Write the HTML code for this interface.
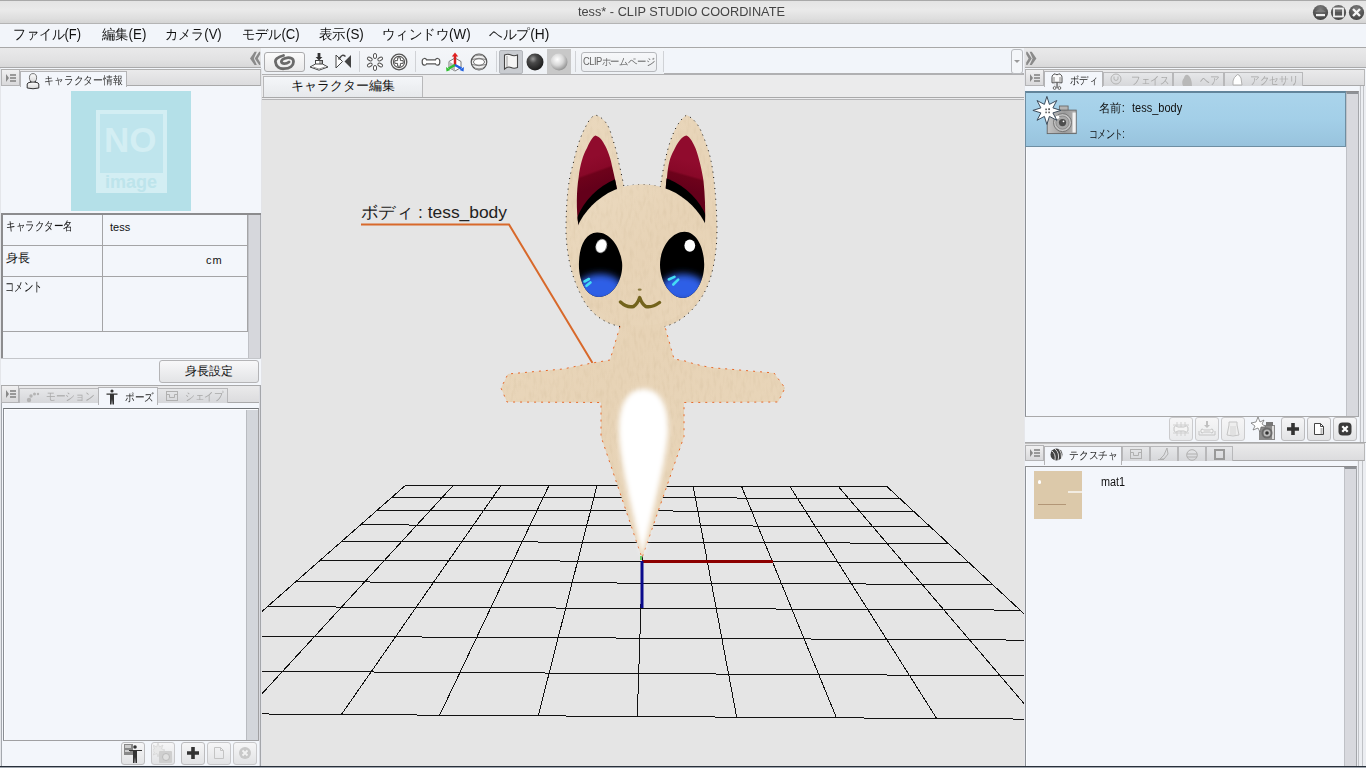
<!DOCTYPE html>
<html><head><meta charset="utf-8">
<style>
*{box-sizing:border-box;margin:0;padding:0}
html,body{width:1366px;height:768px;overflow:hidden;background:#f2f5fa;font-family:"Liberation Sans",sans-serif;color:#111}
.a{position:absolute}
.t{position:absolute;white-space:nowrap;line-height:1}
</style></head><body>
<!-- title bar -->
<div class="a" style="left:0;top:0;width:1366px;height:24px;background:linear-gradient(#e4e4e4,#eaeaea 40%,#dedede 80%,#d4d4d4);border-top:1px solid #a9a9a9;border-bottom:1px solid #b4b4b4"></div>
<div class="t" style="left:578px;top:5px;font-size:13px;color:#444;transform:scaleX(0.98);transform-origin:0 0">tess* - CLIP STUDIO COORDINATE</div>

<svg class="a" style="left:1312px;top:4px" width="54" height="17" viewBox="0 0 54 17"><defs><radialGradient id="wb" cx="0.5" cy="0.25" r="0.8"><stop offset="0" stop-color="#7a7a7a"/><stop offset="1" stop-color="#3e3e3e"/></radialGradient></defs>
<circle cx="8.5" cy="8.5" r="7.6" fill="url(#wb)"/><path d="M3 8 Q8.5 2.5 14 8Z" fill="#8a8a8a" opacity="0.6"/><rect x="4" y="10" width="9" height="2.2" fill="#f0f0f0"/>
<circle cx="26.5" cy="8.5" r="7.6" fill="url(#wb)"/><rect x="22" y="4.5" width="9" height="8" fill="none" stroke="#f0f0f0" stroke-width="1.8"/><rect x="23" y="8" width="7" height="3" fill="#555"/>
<circle cx="44.5" cy="8.5" r="7.6" fill="url(#wb)"/><path d="M41 5 L48 12 M48 5 L41 12" stroke="#f4f4f4" stroke-width="2.4"/>
</svg>
<!-- menu bar -->
<div class="a" style="left:0;top:24px;width:1366px;height:24px;background:#f2f5fa;border-bottom:1px solid #a8a8a8"></div>
<div class="t" style="left:13px;top:27px;font-size:14px;transform:scaleX(0.921);transform-origin:0 0">ファイル(F)</div>
<div class="t" style="left:102px;top:27px;font-size:14px;transform:scaleX(0.950);transform-origin:0 0">編集(E)</div>
<div class="t" style="left:165px;top:27px;font-size:14px;transform:scaleX(0.935);transform-origin:0 0">カメラ(V)</div>
<div class="t" style="left:242px;top:27px;font-size:14px;transform:scaleX(0.940);transform-origin:0 0">モデル(C)</div>
<div class="t" style="left:319px;top:27px;font-size:14px;transform:scaleX(0.961);transform-origin:0 0">表示(S)</div>
<div class="t" style="left:382px;top:27px;font-size:14px;transform:scaleX(0.958);transform-origin:0 0">ウィンドウ(W)</div>
<div class="t" style="left:489px;top:27px;font-size:14px;transform:scaleX(0.982);transform-origin:0 0">ヘルプ(H)</div>

<!-- LEFT PANEL -->

<div class="a" style="left:0;top:48px;width:262px;height:720px;background:#f3f6fb;border-left:1px solid #e4e6ea"></div>
<!-- header -->
<div class="a" style="left:0;top:48px;width:261px;height:20px;background:linear-gradient(#e9e9ea,#e2e2e3 60%,#d8d8d9);border-bottom:1px solid #a9a9aa"></div>
<svg class="a" style="left:249px;top:51px" width="12" height="14" viewBox="0 0 12 14"><path d="M1 7.4 L5.6 0.8 L7.8 0.8 L4.9 7.4 L7.8 14 L5.6 14Z M5.7 7.4 L10.2 0.8 L11.2 0.8 L11.2 3.2 L8.8 7.4 L11.2 11.6 L11.2 14 L10.2 14Z" fill="#8a8a8a"/></svg>
<!-- tab strip -->
<div class="a" style="left:1px;top:69px;width:260px;height:17px;background:linear-gradient(#eaeaeb,#dcdcde);border-top:1px solid #b0b0b0;border-bottom:1px solid #a9a9aa;border-right:1px solid #b8b8b8"></div>
<div class="a" style="left:1px;top:70px;width:19px;height:16px;background:linear-gradient(#f0f0f1,#d9d9db);border:1px solid #b4b4b6;border-top:none"></div>
<svg class="a" style="left:6px;top:74px" width="10" height="8"><path d="M0 0L3 4L0 8Z" fill="#888"/><rect x="4" y="0" width="6" height="2" fill="#999"/><rect x="4" y="3" width="6" height="2" fill="#999"/><rect x="4" y="6" width="6" height="2" fill="#999"/></svg>
<div class="a" style="left:20px;top:71px;width:107px;height:16px;background:#f3f6fb;border:1px solid #b4b4b6;border-bottom:none"></div>
<svg class="a" style="left:26px;top:73px" width="14" height="17" viewBox="0 0 14 17"><defs><linearGradient id="pg" x1="0" y1="0" x2="0" y2="1"><stop offset="0" stop-color="#fdfdfd"/><stop offset="1" stop-color="#d8d8d8"/></linearGradient></defs><path d="M1.2,15 L1.2,11 Q1.5,9.6 4,9.3 L5.5,9 L8.5,9 L10,9.3 Q12.5,9.6 12.8,11 L12.8,15 Q7,16.5 1.2,15Z" fill="url(#pg)" stroke="#333" stroke-width="1"/><ellipse cx="7" cy="4.8" rx="3.6" ry="4.2" fill="url(#pg)" stroke="#666" stroke-width="0.9"/><path d="M4.6,8 L5,9.6 M9.4,8 L9,9.6" stroke="#222" stroke-width="1"/></svg>
<div class="t" style="left:44px;top:75px;font-size:11px;color:#333;transform:scaleX(0.895);transform-origin:0 0">キャラクター情報</div>
<!-- no image -->
<div class="a" style="left:71px;top:91px;width:120px;height:120px;background:#b4e0e8"></div>
<div class="a" style="left:96px;top:110px;width:71px;height:83px;background:#bfe5ed;border:4px solid #d3eef3"></div>
<div class="a" style="left:96px;top:173px;width:71px;height:20px;background:#d3eef3"></div>
<div class="t" style="left:104px;top:122px;font-size:35px;font-weight:bold;color:#d3eef3;letter-spacing:0px">NO</div>
<div class="t" style="left:105px;top:173px;font-size:18px;font-weight:bold;color:#bde4eb;letter-spacing:0px">image</div>
<!-- table -->
<div class="a" style="left:1px;top:213px;width:260px;height:146px;background:#f3f6fb;border-top:2px solid #8c8c8e;border-left:2px solid #8c8c8e"></div>
<div class="a" style="left:248px;top:215px;width:13px;height:143px;background:#d6d7dc;border-left:1px solid #bfc1c6;border-right:1px solid #a9abb0"></div>
<div class="a" style="left:3px;top:245px;width:245px;height:1px;background:#a4a4a6"></div>
<div class="a" style="left:3px;top:276px;width:245px;height:1px;background:#a4a4a6"></div>
<div class="a" style="left:3px;top:331px;width:245px;height:1px;background:#a4a4a6"></div>
<div class="a" style="left:102px;top:215px;width:1px;height:116px;background:#a4a4a6"></div>
<div class="a" style="left:247px;top:215px;width:1px;height:116px;background:#a4a4a6"></div>
<div class="a" style="left:1px;top:358px;width:260px;height:1px;background:#c4c6ca"></div>
<div class="t" style="left:6px;top:220px;font-size:12px;transform:scaleX(0.798);transform-origin:0 0">キャラクター名</div>
<div class="t" style="left:110px;top:222px;font-size:11px">tess</div>
<div class="t" style="left:6px;top:252px;font-size:12px">身長</div>
<div class="t" style="left:206px;top:255px;font-size:11px;letter-spacing:1px">cm</div>
<div class="t" style="left:5px;top:280px;font-size:13px;transform:scaleX(0.72);transform-origin:0 0">コメント</div>
<!-- button -->
<div class="a" style="left:159px;top:360px;width:100px;height:23px;background:linear-gradient(#f8f8f9,#e3e4e6);border:1px solid #b4b4b6;border-radius:3px"></div>
<div class="t" style="left:159px;width:100px;top:365px;text-align:center;font-size:12px">身長設定</div>
<!-- second panel tab strip -->
<div class="a" style="left:1px;top:385px;width:260px;height:1px;background:#a9a9aa"></div>
<div class="a" style="left:1px;top:386px;width:260px;height:17px;background:linear-gradient(#eaeaeb,#dcdcde);border-bottom:1px solid #a9a9aa;border-right:1px solid #b8b8b8"></div>
<div class="a" style="left:1px;top:386px;width:18px;height:17px;background:linear-gradient(#f0f0f1,#d9d9db);border:1px solid #b4b4b6;border-top:none"></div>
<svg class="a" style="left:6px;top:390px" width="10" height="8"><path d="M0 0L3 4L0 8Z" fill="#888"/><rect x="4" y="0" width="6" height="2" fill="#999"/><rect x="4" y="3" width="6" height="2" fill="#999"/><rect x="4" y="6" width="6" height="2" fill="#999"/></svg>
<div class="a" style="left:19px;top:388px;width:80px;height:15px;background:linear-gradient(#e6e7e9,#d6d7da);border:1px solid #b8b8ba;border-bottom:none"></div>
<svg class="a" style="left:25px;top:391px" width="16" height="12"><circle cx="4" cy="9" r="2.2" fill="#b4b4b4"/><circle cx="6" cy="5" r="1.7" fill="#b4b4b4"/><circle cx="9.5" cy="3" r="1.5" fill="#b4b4b4"/><circle cx="13" cy="3" r="1.2" fill="#b4b4b4"/></svg>
<div class="t" style="left:46px;top:391px;font-size:11px;color:#a8a8a8;transform:scaleX(0.881);transform-origin:0 0">モーション</div>
<div class="a" style="left:98px;top:387px;width:60px;height:18px;background:#f3f6fb;border:1px solid #b4b4b6;border-bottom:none"></div>
<svg class="a" style="left:106px;top:389px" width="12" height="16" viewBox="0 0 12 16"><circle cx="6" cy="2" r="1.6" fill="#333"/><path d="M0.5 4.5 L11.5 4.5 L11.5 5.8 L8 5.8 L8 15.5 L6.5 15.5 L6 10 L5.5 15.5 L4 15.5 L4 5.8 L0.5 5.8Z" fill="#333"/></svg>
<div class="t" style="left:125px;top:392px;font-size:11px;color:#222;transform:scaleX(0.875);transform-origin:0 0">ポーズ</div>
<div class="a" style="left:157px;top:388px;width:71px;height:15px;background:linear-gradient(#e6e7e9,#d6d7da);border:1px solid #b8b8ba;border-bottom:none"></div>
<svg class="a" style="left:166px;top:391px" width="12" height="10"><rect x="0.5" y="0.5" width="11" height="9" fill="none" stroke="#b0b0b0"/><path d="M0.5 3.5 L3.5 3.5 L3.5 6.5 L8.5 6.5 L8.5 3.5 L11.5 3.5" fill="none" stroke="#b0b0b0"/></svg>
<div class="t" style="left:185px;top:391px;font-size:11px;color:#a8a8a8;transform:scaleX(0.879);transform-origin:0 0">シェイプ</div>
<!-- list box -->
<div class="a" style="left:3px;top:408px;width:256px;height:333px;background:#f3f6fb;border:1px solid #a0a0a2;border-top:1px solid #707478;border-left:1px solid #8a8e94;box-shadow:inset 1px 1px 0 #fcfdff"></div><div class="a" style="left:1px;top:403px;width:1px;height:363px;background:#a4a8ae"></div>
<div class="a" style="left:246px;top:410px;width:12px;height:330px;background:#d3d6db;border-left:1px solid #b8bbc0"></div>
<!-- bottom buttons -->
<div class="a" style="left:121px;top:742px;width:24px;height:23px;background:linear-gradient(#f6f6f7,#e2e3e5);border:1px solid #bcbcbe;border-radius:3px"></div>
<div class="a" style="left:151px;top:742px;width:24px;height:23px;background:linear-gradient(#f6f6f7,#e2e3e5);border:1px solid #c8c8ca;border-radius:3px"></div>
<div class="a" style="left:181px;top:742px;width:24px;height:23px;background:linear-gradient(#f6f6f7,#e2e3e5);border:1px solid #bcbcbe;border-radius:3px"></div>
<div class="a" style="left:207px;top:742px;width:24px;height:23px;background:linear-gradient(#f6f6f7,#e2e3e5);border:1px solid #c8c8ca;border-radius:3px"></div>
<div class="a" style="left:233px;top:742px;width:24px;height:23px;background:linear-gradient(#f6f6f7,#e2e3e5);border:1px solid #c8c8ca;border-radius:3px"></div>
<svg class="a" style="left:123px;top:743px" width="20" height="21" viewBox="0 0 20 21"><rect x="1" y="1" width="9" height="11" fill="#888" /><rect x="2" y="2" width="6" height="3" fill="#ccc"/><rect x="2" y="7" width="5" height="2" fill="#ccc"/><circle cx="12" cy="4" r="1.8" fill="#333"/><path d="M6 7 L19 7 L19 8 L14 8 L14 20 L12.5 20 L12 14 L11.5 20 L10 20 L10 8 L6 8Z" fill="#333"/></svg>
<svg class="a" style="left:153px;top:743px" width="20" height="21" viewBox="0 0 20 21"><path d="M5 0 L6.5 4 L10 2 L8.5 6 L12 7 L8.5 9 L10 12 L6 10.5 L5 14 L4 10.5 L0 12 L1.5 9 L-1 7 L1.5 6 L0 2 L3.5 4Z" fill="#e8e8e8" stroke="#d0d0d0" stroke-width="0.6"/><rect x="6" y="8" width="13" height="12" rx="1" fill="#cfcfcf"/><circle cx="13" cy="14" r="3.5" fill="#e0e0e0" stroke="#bbb"/></svg>
<svg class="a" style="left:186px;top:746px" width="14" height="14" viewBox="0 0 14 14"><path d="M5.2 1 h3.6 v4.2 h4.2 v3.6 h-4.2 v4.2 h-3.6 v-4.2 h-4.2 v-3.6 h4.2z" fill="#333"/></svg>
<svg class="a" style="left:212px;top:746px" width="14" height="14" viewBox="0 0 14 14"><path d="M2.5 1.5 h6 l3 3 v8 h-9z M8.5 1.5 v3 h3" fill="none" stroke="#c4c4c4"/></svg>
<svg class="a" style="left:238px;top:746px" width="14" height="14" viewBox="0 0 14 14"><circle cx="7" cy="7" r="6" fill="#c8c8c8"/><path d="M4.5 4.5 L9.5 9.5 M9.5 4.5 L4.5 9.5" stroke="#f2f2f2" stroke-width="1.8"/></svg>
<div class="a" style="left:259px;top:386px;width:1px;height:380px;background:#dadbe0"></div><div class="a" style="left:260px;top:386px;width:1px;height:380px;background:#a4a6aa"></div>
<div class="a" style="left:261px;top:68px;width:1px;height:700px;background:#e3e4e8"></div>

<!-- CENTER -->

<!-- toolbar -->
<div class="a" style="left:262px;top:48px;width:762px;height:27px;background:linear-gradient(#f4f6f9,#eef1f5);border-bottom:1px solid #b0b0b2"></div>
<div class="a" style="left:264px;top:52px;width:41px;height:20px;background:linear-gradient(#fbfbfb,#e9e9ea);border:1px solid #ababad;border-radius:3px"></div>
<svg class="a" style="left:274px;top:53px" width="21" height="18" viewBox="0 0 21 18"><path d="M9.5,2.5 C3,4 1,7 1.5,9 C2,14 6,16 10,15.7 C16,15.5 19.5,12.5 19.5,8.7 C19.5,5 16,4.5 13,4.8 C9,5.2 7,7.5 7.5,9.2 C8,11 12,11.5 15,9" fill="none" stroke="#6a6a6a" stroke-width="2.8" stroke-linecap="round"/></svg>
<!-- person platform -->
<svg class="a" style="left:309px;top:52px" width="20" height="19" viewBox="0 0 20 19"><path d="M8.6 1h2.8v4h2l-3.4 3.5-3.4-3.5h2z" fill="#333"/><rect x="6.5" y="8.5" width="7" height="6" fill="#fff" stroke="#444"/><rect x="10" y="9" width="3" height="5" fill="#aaa"/><path d="M1 15 L6.5 12 L13.5 12 L19 15 L10 18.2 Z" fill="#fff" stroke="#444"/><path d="M4 15 L10 17 L16 15" fill="none" stroke="#999"/></svg>
<!-- mirror -->
<svg class="a" style="left:335px;top:53px" width="17" height="16" viewBox="0 0 17 16"><path d="M1 2 L7.5 8.5 L1 15 Z" fill="#fff" stroke="#444"/><path d="M16 2 L9.5 8.5 L16 15Z" fill="#444"/><path d="M5 5 Q7 0.5 10.5 3.5" fill="none" stroke="#444" stroke-width="1.5"/><path d="M4 3.5 L6 6.5 L3 6.5Z" fill="#444"/></svg>
<div class="a" style="left:359px;top:51px;width:1px;height:21px;background:#d0d2d6"></div>
<!-- dots ring -->
<svg class="a" style="left:366px;top:53px" width="18" height="18" viewBox="0 0 18 18"><g fill="#fff" stroke="#555" stroke-width="1"><rect x="7.5" y="0.5" width="3" height="5" rx="1.5"/><rect x="7.5" y="12.5" width="3" height="5" rx="1.5"/><rect x="7.5" y="0.5" width="3" height="5" rx="1.5" transform="rotate(60 9 9)"/><rect x="7.5" y="0.5" width="3" height="5" rx="1.5" transform="rotate(120 9 9)"/><rect x="7.5" y="0.5" width="3" height="5" rx="1.5" transform="rotate(240 9 9)"/><rect x="7.5" y="0.5" width="3" height="5" rx="1.5" transform="rotate(300 9 9)"/></g></svg>
<!-- circle plus -->
<svg class="a" style="left:390px;top:53px" width="18" height="18" viewBox="0 0 18 18"><circle cx="9" cy="9" r="7.8" fill="#f6f6f6" stroke="#555" stroke-width="1.3"/><circle cx="9" cy="9" r="5.6" fill="#fff" stroke="#555" stroke-width="1.1"/><path d="M7.6 4.8h2.8v2.8h2.8v2.8h-2.8v2.8h-2.8v-2.8h-2.8v-2.8h2.8z" fill="#fff" stroke="#555" stroke-width="1"/></svg>
<div class="a" style="left:415px;top:51px;width:1px;height:21px;background:#d0d2d6"></div>
<!-- bone -->
<svg class="a" style="left:421px;top:57px" width="20" height="10" viewBox="0 0 20 10"><path d="M3.2 1.5 Q5 1.3 5.5 2.8 L14.5 2.8 Q15 1.3 16.8 1.5 Q19 1.8 18.8 4.8 Q19 7.9 16.8 8.2 Q15 8.4 14.5 6.9 L5.5 6.9 Q5 8.4 3.2 8.2 Q1 7.9 1.2 4.8 Q1 1.8 3.2 1.5Z" fill="#fff" stroke="#555" stroke-width="1.2"/></svg>
<!-- axis -->
<svg class="a" style="left:445px;top:52px" width="20" height="20" viewBox="0 0 20 20"><path d="M10 6 L16 9.5 L16 15.5 L10 19 L4 15.5 L4 9.5Z" fill="#fff" stroke="#666" stroke-width="0.9"/><path d="M4 9.5 L10 13 L10 19 L4 15.5Z" fill="#bbb"/><path d="M10 13 L10 3" stroke="#d42020" stroke-width="2.5"/><path d="M6.8 4.5 L10 0.5 L13.2 4.5Z" fill="#e02020"/><path d="M10 13 L3.5 16.5" stroke="#30c030" stroke-width="2.5"/><path d="M1 15 L1.5 19.5 L5.5 18Z" fill="#30c030"/><path d="M10 13 L16.5 16.5" stroke="#2060e0" stroke-width="2.5"/><path d="M19 15 L18.5 19.5 L14.5 18Z" fill="#2060e0"/></svg>
<!-- globe -->
<svg class="a" style="left:470px;top:53px" width="18" height="18" viewBox="0 0 18 18"><circle cx="9" cy="9" r="7.8" fill="#eee" stroke="#555" stroke-width="1.2"/><ellipse cx="9" cy="9" rx="5.5" ry="3.2" fill="#fff" stroke="#666" stroke-width="0.9"/><path d="M2 6.5 Q9 4 16 6.5 M2 11.5 Q9 14 16 11.5" fill="none" stroke="#777" stroke-width="0.9"/><path d="M5 2.5 Q9 1.5 13 2.5 M5 15.5 Q9 16.5 13 15.5" fill="none" stroke="#999" stroke-width="1.5"/></svg>
<div class="a" style="left:496px;top:51px;width:1px;height:21px;background:#d0d2d6"></div>
<!-- flag pressed -->
<div class="a" style="left:499px;top:50px;width:24px;height:24px;background:#c9ccd1;border:1px solid #b3b6bb;border-radius:2px"></div>
<svg class="a" style="left:503px;top:53px" width="16" height="18" viewBox="0 0 16 18"><path d="M1.5 2 Q5 0.5 8 2 Q11 3.5 14.5 2 L14.5 14.5 Q11 16 8 14.5 Q5 13 1.5 16 Z" fill="#f4f4f4" stroke="#444" stroke-width="1.1"/><path d="M4 3 L4 14.5" stroke="#888" stroke-width="0.8"/></svg>
<svg class="a" style="left:526px;top:53px" width="18" height="18" viewBox="0 0 18 18"><defs><radialGradient id="ds" cx="0.38" cy="0.32" r="0.7"><stop offset="0" stop-color="#9a9a9a"/><stop offset="0.35" stop-color="#4a4a4a"/><stop offset="1" stop-color="#1a1a1a"/></radialGradient></defs><circle cx="9" cy="9" r="8.5" fill="url(#ds)"/></svg>
<div class="a" style="left:547px;top:49px;width:24px;height:25px;background:#c8c8c8"></div>
<svg class="a" style="left:550px;top:53px" width="18" height="18" viewBox="0 0 18 18"><defs><radialGradient id="ls" cx="0.4" cy="0.35" r="0.7"><stop offset="0" stop-color="#ffffff"/><stop offset="0.5" stop-color="#d8d8d8"/><stop offset="1" stop-color="#8a8a8a"/></radialGradient></defs><circle cx="9" cy="9" r="8.5" fill="url(#ls)"/></svg>
<div class="a" style="left:575px;top:51px;width:1px;height:21px;background:#d0d2d6"></div>
<div class="a" style="left:581px;top:52px;width:76px;height:20px;background:linear-gradient(#f6f7f9,#eceef1);border:1px solid #b6b8bc;border-radius:3px"></div>
<div class="t" style="left:583px;width:auto;top:57px;text-align:left;font-size:10px;color:#666;letter-spacing:-0.6px;transform:scaleX(0.94);transform-origin:0 0">CLIPホームページ</div>
<div class="a" style="left:663px;top:51px;width:1px;height:21px;background:#d0d2d6"></div>
<div class="a" style="left:664px;top:49px;width:360px;height:25px;background:#f2f5fa;border-bottom:1px solid #b0b0b2"></div>
<div class="a" style="left:1011px;top:49px;width:12px;height:25px;background:#f4f6f9;border:1px solid #b8babe;border-radius:3px"></div>
<svg class="a" style="left:1014px;top:60px" width="6" height="4"><path d="M0 0h6l-3 3z" fill="#999"/></svg>
<!-- center tab strip -->
<div class="a" style="left:262px;top:75px;width:762px;height:23px;background:#ebebec;border-bottom:1px solid #a9a9aa"></div>
<div class="a" style="left:262px;top:98px;width:762px;height:1px;background:#ececee"></div>
<div class="a" style="left:263px;top:76px;width:160px;height:21px;background:linear-gradient(#f4f6f9,#e7e9ec);border:1px solid #b8b8ba;border-bottom:none"></div>
<div class="t" style="left:263px;width:160px;top:79px;text-align:center;font-size:13px;color:#111">キャラクター編集</div>
<!-- viewport -->
<div class="a" style="left:262px;top:99px;width:762px;height:669px;background:#e5e5e5;overflow:hidden">
<svg width="762" height="669" style="position:absolute;left:0;top:0">
<g stroke="#111" stroke-width="1" shape-rendering="crispEdges">
<line x1="143.30" y1="386.50" x2="624.90" y2="387.50"/>
<line x1="129.97" y1="398.21" x2="637.70" y2="399.38"/>
<line x1="115.13" y1="411.25" x2="651.98" y2="412.63"/>
<line x1="98.48" y1="425.87" x2="668.01" y2="427.51"/>
<line x1="79.69" y1="442.38" x2="686.13" y2="444.32"/>
<line x1="58.32" y1="461.15" x2="706.77" y2="463.48"/>
<line x1="33.78" y1="482.71" x2="730.51" y2="485.52"/>
<line x1="5.33" y1="507.70" x2="758.10" y2="511.12"/>
<line x1="-28.07" y1="537.04" x2="790.56" y2="541.25"/>
<line x1="-67.81" y1="571.95" x2="829.30" y2="577.20"/>
<line x1="-115.89" y1="614.19" x2="876.34" y2="620.85"/>
<line x1="143.30" y1="386.50" x2="-115.89" y2="614.19"/>
<line x1="191.04" y1="386.60" x2="-18.44" y2="614.84"/>
<line x1="238.87" y1="386.70" x2="79.40" y2="615.50"/>
<line x1="286.80" y1="386.80" x2="177.63" y2="616.16"/>
<line x1="334.82" y1="386.90" x2="276.25" y2="616.82"/>
<line x1="382.93" y1="387.00" x2="375.27" y2="617.49"/>
<line x1="431.14" y1="387.10" x2="474.68" y2="618.16"/>
<line x1="479.44" y1="387.20" x2="574.49" y2="618.83"/>
<line x1="527.83" y1="387.30" x2="674.70" y2="619.50"/>
<line x1="576.32" y1="387.40" x2="775.32" y2="620.18"/>
<line x1="624.90" y1="387.50" x2="876.34" y2="620.85"/>
</g>
<g transform="translate(-262 -99)">
<defs>
<linearGradient id="fur" x1="0" y1="0" x2="1" y2="1"><stop offset="0" stop-color="#ebdac0"/><stop offset="0.5" stop-color="#e7d3b6"/><stop offset="1" stop-color="#e9d6ba"/></linearGradient>
<linearGradient id="earL" gradientUnits="userSpaceOnUse" x1="592" y1="157" x2="602" y2="185"><stop offset="0" stop-color="#900b2d"/><stop offset="0.47" stop-color="#880828"/><stop offset="0.55" stop-color="#6e021b"/><stop offset="1" stop-color="#64001a"/></linearGradient>
<linearGradient id="earR" gradientUnits="userSpaceOnUse" x1="690" y1="161" x2="682" y2="189"><stop offset="0" stop-color="#900b2d"/><stop offset="0.47" stop-color="#880828"/><stop offset="0.55" stop-color="#6e021b"/><stop offset="1" stop-color="#64001a"/></linearGradient>
<linearGradient id="eye" x1="0" y1="0" x2="0" y2="1"><stop offset="0" stop-color="#000"/><stop offset="0.56" stop-color="#01010a"/><stop offset="0.68" stop-color="#10256e"/><stop offset="0.8" stop-color="#2a58da"/><stop offset="0.92" stop-color="#2f62ea"/><stop offset="1" stop-color="#1e3cb0"/></linearGradient>
<filter id="furtex" x="0" y="0" width="100%" height="100%"><feTurbulence type="fractalNoise" baseFrequency="0.3 0.1" numOctaves="2" seed="3" result="n"/><feColorMatrix in="n" type="matrix" values="0 0 0 0 0.55  0 0 0 0 0.42  0 0 0 0 0.25  0 0 0 -1.6 0.9" result="c"/><feComposite in="c" in2="SourceGraphic" operator="in"/></filter>
<filter id="blur3" x="-50%" y="-50%" width="200%" height="200%"><feGaussianBlur stdDeviation="3.5"/></filter>
<filter id="blur2" x="-30%" y="-30%" width="160%" height="160%"><feGaussianBlur stdDeviation="2.4"/></filter>
<filter id="blur1" x="-20%" y="-20%" width="140%" height="140%"><feGaussianBlur stdDeviation="0.6"/></filter>
<filter id="blurS" x="-20%" y="-20%" width="140%" height="140%"><feGaussianBlur stdDeviation="1.2"/></filter>
<clipPath id="lec"><path d="M595.5,135.4 C600,137 603,141 604,143.8 C608,150 611,160 612,166 C614,175 616,183 617.5,192 L578.6,226 C576,210 576.5,190 578.6,177.7 C580,165 583,155 587,148 C590,141 593,136 595.5,135.4Z"/></clipPath>
<clipPath id="rec"><path d="M686.5,135.4 C690,137 693,142 695.8,149 C699,158 702,170 703.5,181 C705,195 705.5,210 705,224 L665.5,192 C666,183 666.5,178 667,177.7 C668,165 670,157 673.8,150.6 C677,143 682,136 686.5,135.4Z"/></clipPath>
</defs>
<!-- annotation -->
<text x="361" y="218" font-family="Liberation Sans, sans-serif" font-size="17" fill="#222" textLength="146" lengthAdjust="spacingAndGlyphs">ボディ : tess_body</text>
<path d="M361 224.5 L509 224.5 L592.5 363" fill="none" stroke="#d8692b" stroke-width="2"/>
<!-- body silhouette -->
<path id="sil" d="M595.5,115.1 C603,117 609,125 611,134 C614,143 617,152 618.4,160.8 C620.5,170 622.5,179 624,187 Q642,182 660.3,187 C662,176 664,164 666.2,155.7 C670,140 676,122 686.5,115.1 C693,118 698,124 701,131 C705,140 709,151 711,160.8 C714,175 716.5,200 717,228.4 C717,255 712,280 703.5,294 C696,308 682,322 664.8,326.5 L674,359 L685,361 C700,366 712,368 722,368.5 L774,373 L785,388 L778,402 L684,402.5 L684,436.5 L642,558 L601,436.5 L601,402.5 L507,402 L501,388 L508,374 L563,369 L592,363 L610,360 L620,326.5 C603,323 588,312 580.5,294 C574,281 567,262 566,232 C566,205 568,180 572.7,165.8 C576,150 580,137 586,126 C589,120 592,116 595.5,115.1 Z" fill="url(#fur)"/>
<use href="#sil" fill="#000" filter="url(#furtex)" opacity="0.25"/>
<path d="M620,326.5 L610,360 L592,363 L563,369 L508,374 L501,388 L507,402 L601,402.5 L601,436.5 L642,558 L684,436.5 L684,402.5 L778,402 L785,388 L774,373 L722,368.5 C712,368 700,366 685,361 L674,359 L665,326.5" fill="none" stroke="#e8692a" stroke-width="1" stroke-dasharray="2 5"/>
<path d="M620,326.5 C603,323 588,312 580.5,294 C574,281 567,262 566,232 C566,205 568,180 572.7,165.8 C576,150 580,137 586,126 C589,120 592,116 595.5,115.1 C603,117 609,125 611,134 C614,143 617,152 618.4,160.8 C620.5,170 622.5,179 624,187 Q642,182 660.3,187 C662,176 664,164 666.2,155.7 C670,140 676,122 686.5,115.1 C693,118 698,124 701,131 C705,140 709,151 711,160.8 C714,175 716.5,200 717,228.4 C717,255 712,280 703.5,294 C696,308 682,322 664.8,326.5" fill="none" stroke="#111" stroke-width="1" stroke-dasharray="1 4.5"/>
<!-- inner ears -->
<g clip-path="url(#lec)"><rect x="570" y="130" width="60" height="100" fill="url(#earL)"/><circle cx="642" cy="244" r="70" fill="#000" filter="url(#blur1)"/></g>
<g clip-path="url(#rec)"><rect x="655" y="130" width="60" height="100" fill="url(#earR)"/><circle cx="642" cy="244" r="70" fill="#000" filter="url(#blur1)"/></g>
<!-- head cap -->
<circle cx="642" cy="255" r="70.5" fill="url(#fur)"/>
<circle cx="642" cy="255" r="70.5" fill="#000" filter="url(#furtex)" opacity="0.25"/>
<!-- eyes -->
<clipPath id="lclip"><path d="M597,232.5 C609,232 619.5,245 622,262 C624,280 612,297 599,297 C586,297 578,280 579,262 C579.5,245 586,233 597,232.5Z"/></clipPath><clipPath id="rclip"><path d="M684.5,231.8 C697,232 704,248 704.2,264 C704.5,282 694,298 683,298 C671,298 660,282 660,265 C660,248 671,232 684.5,231.8Z"/></clipPath>
<path d="M597,232.5 C609,232 619.5,245 622,262 C624,280 612,297 599,297 C586,297 578,280 579,262 C579.5,245 586,233 597,232.5Z" fill="#000" filter="url(#blur1)"/>
<g clip-path="url(#lclip)"><ellipse cx="600" cy="288" rx="22" ry="14" fill="#2d5fe6" filter="url(#blur3)"/></g>
<path d="M684.5,231.8 C697,232 704,248 704.2,264 C704.5,282 694,298 683,298 C671,298 660,282 660,265 C660,248 671,232 684.5,231.8Z" fill="#000" filter="url(#blur1)"/>
<g clip-path="url(#rclip)"><ellipse cx="683" cy="288" rx="22" ry="14" fill="#2d5fe6" filter="url(#blur3)"/></g>
<ellipse cx="601.3" cy="246" rx="5.4" ry="7" transform="rotate(20 601.3 246)" fill="#fff" filter="url(#blur1)"/>
<ellipse cx="689.8" cy="245.6" rx="5.4" ry="6.2" fill="#fff" filter="url(#blur1)"/>
<path d="M584.5,281.5 L589,279 M586.5,285.8 L590.5,282.5" stroke="#44dcf4" stroke-width="2.6" stroke-linecap="round"/>
<path d="M668.8,279.5 L674.5,276.8 M673.3,284.5 L678.2,279.6" stroke="#44dcf4" stroke-width="2.6" stroke-linecap="round"/>
<!-- mouth -->
<path d="M620.5,302 Q627,308 633.5,306.5 Q637.5,304 639.7,297.5 Q641.8,304 645.8,306.5 Q652,308 659.5,302.5" fill="none" stroke="#73631f" stroke-width="3.4" stroke-linecap="round" stroke-linejoin="round" filter="url(#blur1)"/>
<ellipse cx="639.7" cy="289.6" rx="2" ry="1.2" fill="#8a7a40"/>
<!-- belly -->
<path d="M643.5,389 C661,389 668.5,408 668,430 C667,458 654,505 642.5,556 C631,505 619,458 619,430 C618.5,408 626,389 643.5,389Z" fill="#fff" filter="url(#blur2)"/>
<!-- axis -->
<rect x="642" y="560" width="131" height="3" fill="#8c0000"/>
<rect x="640.5" y="561" width="3" height="47" fill="#0a0a8c"/>
<rect x="640" y="556" width="2" height="4" fill="#6c6"/>
</g>
</svg>
</div>
<div class="a" style="left:262px;top:99px;width:762px;height:1px;background:#b4b4b6"></div>
<div class="a" style="left:1024px;top:48px;width:1px;height:720px;background:#e6e7eb"></div>

<!-- RIGHT -->

<div class="a" style="left:1025px;top:48px;width:341px;height:720px;background:#f3f6fb"></div>
<!-- header -->
<div class="a" style="left:1025px;top:48px;width:341px;height:20px;background:linear-gradient(#e9e9ea,#e2e2e3 60%,#d8d8d9);border-bottom:1px solid #a9a9aa"></div>
<svg class="a" style="left:1026px;top:51px" width="11" height="14" viewBox="0 0 11 14"><path d="M0.2 0.8 L1.4 0.8 L5.8 7.4 L1.4 14 L0.2 14 L0.2 11.6 L2.6 7.4 L0.2 3.2Z M3.6 0.8 L5.8 0.8 L10.4 7.4 L5.8 14 L3.6 14 L6.6 7.4Z" fill="#8a8a8a"/></svg>
<!-- tab strip -->
<div class="a" style="left:1025px;top:69px;width:340px;height:17px;background:linear-gradient(#eaeaeb,#dcdcde);border-top:1px solid #b0b0b0;border-bottom:1px solid #a9a9aa;border-right:1px solid #b8b8b8"></div>
<div class="a" style="left:1025px;top:70px;width:19px;height:16px;background:linear-gradient(#f0f0f1,#d9d9db);border:1px solid #b4b4b6;border-top:none"></div>
<svg class="a" style="left:1030px;top:74px" width="10" height="8"><path d="M0 0L3 4L0 8Z" fill="#888"/><rect x="4" y="0" width="6" height="2" fill="#999"/><rect x="4" y="3" width="6" height="2" fill="#999"/><rect x="4" y="6" width="6" height="2" fill="#999"/></svg>
<div class="a" style="left:1044px;top:71px;width:59px;height:16px;background:#f3f6fb;border:1px solid #b4b4b6;border-bottom:none"></div>
<svg class="a" style="left:1051px;top:73px" width="12" height="17" viewBox="0 0 12 17"><path d="M4.2,0.8 C2,1.2 1,2.6 1,4.6 L1,9.8 L3.6,9.8 L3.6,9.3 L8.4,9.3 L8.4,9.8 L11,9.8 L11,4.6 C11,2.6 10,1.2 7.8,0.8 L7.2,1.6 L4.8,1.6Z" fill="#fafafa" stroke="#4a4a4a" stroke-width="1"/><path d="M3,4 L3,9 M9,4 L9,9" stroke="#9a9a9a" stroke-width="1.2"/><rect x="5.3" y="9.3" width="1.5" height="5.6" fill="#6e6e6e"/><path d="M4,9.5 L3.8,13 M8,9.5 L8.2,13" stroke="#c8c8c8" stroke-width="0.8"/><circle cx="3.6" cy="15" r="1.4" fill="#fff" stroke="#555" stroke-width="0.9"/><circle cx="8.4" cy="15" r="1.4" fill="#fff" stroke="#555" stroke-width="0.9"/></svg>
<div class="t" style="left:1070px;top:75px;font-size:11px;color:#222;transform:scaleX(0.843);transform-origin:0 0">ボディ</div>
<div class="a" style="left:1103px;top:72px;width:70px;height:14px;background:linear-gradient(#e6e7e9,#d6d7da);border:1px solid #b8b8ba;border-bottom:none"></div>
<svg class="a" style="left:1110px;top:73px" width="12" height="12" viewBox="0 0 12 12"><circle cx="6" cy="6" r="5" fill="none" stroke="#b4b4b4"/><path d="M4 3.5v3q2 2 4 0v-3" fill="none" stroke="#b4b4b4"/></svg>
<div class="t" style="left:1131px;top:75px;font-size:11px;color:#a8a8a8;transform:scaleX(0.867);transform-origin:0 0">フェイス</div>
<div class="a" style="left:1173px;top:72px;width:51px;height:14px;background:linear-gradient(#e6e7e9,#d6d7da);border:1px solid #b8b8ba;border-bottom:none"></div>
<svg class="a" style="left:1180px;top:73px" width="13" height="13" viewBox="0 0 13 13"><path d="M3 13 Q1 8 4 5 Q5 1 8 2 Q12 5 12 13Z" fill="#b8b8b8"/></svg>
<div class="t" style="left:1200px;top:75px;font-size:11px;color:#a8a8a8;transform:scaleX(0.876);transform-origin:0 0">ヘア</div>
<div class="a" style="left:1224px;top:72px;width:79px;height:14px;background:linear-gradient(#e6e7e9,#d6d7da);border:1px solid #b8b8ba;border-bottom:none"></div>
<svg class="a" style="left:1231px;top:73px" width="12" height="13" viewBox="0 0 12 13"><path d="M2 12 L2 8 Q3 4 5 3 Q6 0.5 8 2 L10 5 L11 12Z" fill="#fff" stroke="#b0b0b0"/></svg>
<div class="t" style="left:1250px;top:75px;font-size:11px;color:#a8a8a8;transform:scaleX(0.881);transform-origin:0 0">アクセサリ</div>
<!-- list -->
<div class="a" style="left:1025px;top:91px;width:334px;height:326px;background:#f3f6fb;border-top:1px solid #8c8c8e;border-bottom:1px solid #a9a9aa;border-left:1px solid #8c9096;border-right:1px solid #a4a6aa"></div><div class="a" style="left:1026px;top:147px;width:1px;height:268px;background:#fafcff"></div>
<div class="a" style="left:1346px;top:92px;width:12px;height:324px;background:#d8d9de;border-left:1px solid #bfc1c6;border-top:2px solid #8e9196"></div>
<div class="a" style="left:1025px;top:91px;width:321px;height:56px;background:linear-gradient(#aad4eb,#a3cfe8 50%,#98c3dd);border:1px solid #6e8ea2;border-top:2px solid #62849a"></div>
<svg class="a" style="left:1032px;top:95px" width="46" height="40" viewBox="0 0 46 40"><defs><linearGradient id="camg" x1="0" y1="0" x2="1" y2="0"><stop offset="0" stop-color="#c4c4c4"/><stop offset="0.6" stop-color="#9a9a9a"/><stop offset="1" stop-color="#b0b0b0"/></linearGradient></defs><rect x="27.4" y="11" width="8.7" height="4.5" fill="#b4b4b4" stroke="#6a6a6a" stroke-width="0.9"/><rect x="15.2" y="15.1" width="29" height="23.5" fill="url(#camg)" stroke="#666" stroke-width="0.9"/><rect x="40.5" y="17.5" width="3.2" height="20" fill="#f2f2f2"/><circle cx="30.5" cy="27.6" r="9" fill="#c2c2c2" stroke="#6e6e6e" stroke-width="0.9"/><circle cx="30.5" cy="27.6" r="6.6" fill="#a8a8a8" stroke="#7a7a7a" stroke-width="0.7"/><circle cx="30.5" cy="27.6" r="3.6" fill="#4e4e4e"/><circle cx="25.5" cy="22.3" r="1.8" fill="#fff"/><circle cx="31.5" cy="26.3" r="0.9" fill="#fff"/><path d="M14.9,1.4 L17.4,9.4 L24.8,5.5 L20.9,12.9 L28.9,15.4 L20.9,17.9 L24.8,25.3 L17.4,21.4 L14.9,29.4 L12.4,21.4 L5.0,25.3 L8.9,17.9 L0.9,15.4 L8.9,12.9 L5.0,5.5 L12.4,9.4Z" fill="#fff" stroke="#3c4c5c" stroke-width="1"/><rect x="13.3" y="13.6" width="1.6" height="1.6" fill="#555"/><rect x="16.3" y="13.3" width="1.6" height="1.8" fill="#444"/><rect x="13.3" y="16.6" width="1.6" height="1.6" fill="#666"/><rect x="16.3" y="16.6" width="1.6" height="1.6" fill="#555"/></svg>
<div class="t" style="left:1099px;top:102px;font-size:12px;color:#111;transform:scaleX(0.943);transform-origin:0 0">名前:</div>
<div class="t" style="left:1132px;top:102px;font-size:12px;color:#111;transform:scaleX(0.918);transform-origin:0 0">tess_body</div>
<div class="t" style="left:1089px;top:128px;font-size:12px;color:#111;letter-spacing:-1px;transform:scaleX(0.756);transform-origin:0 0">コメント:</div>
<!-- buttons -->
<div class="a" style="left:1169px;top:417px;width:24px;height:24px;background:linear-gradient(#f6f6f7,#e9eaec);border:1px solid #cbcbcd;border-radius:3px"></div>
<div class="a" style="left:1195px;top:417px;width:24px;height:24px;background:linear-gradient(#f6f6f7,#e9eaec);border:1px solid #cbcbcd;border-radius:3px"></div>
<div class="a" style="left:1221px;top:417px;width:24px;height:24px;background:linear-gradient(#f6f6f7,#e9eaec);border:1px solid #cbcbcd;border-radius:3px"></div>
<div class="a" style="left:1281px;top:417px;width:24px;height:24px;background:linear-gradient(#f6f6f7,#e2e3e5);border:1px solid #bcbcbe;border-radius:3px"></div>
<div class="a" style="left:1307px;top:417px;width:24px;height:24px;background:linear-gradient(#f6f6f7,#e2e3e5);border:1px solid #bcbcbe;border-radius:3px"></div>
<div class="a" style="left:1333px;top:417px;width:24px;height:24px;background:linear-gradient(#f6f6f7,#e2e3e5);border:1px solid #bcbcbe;border-radius:3px"></div>
<svg class="a" style="left:1172px;top:421px" width="18" height="16" viewBox="0 0 18 16"><path d="M5 1v14M9 1v14M13 1v14M1 4h16M1 12h16" stroke="#d0d0d0"/><path d="M3.5 5 Q5 5 5.5 6 L12.5 6 Q13 5 14.5 5 Q16.5 5.5 16 8 Q16.5 10.5 14.5 11 Q13 11 12.5 10 L5.5 10 Q5 11 3.5 11 Q1.5 10.5 2 8 Q1.5 5.5 3.5 5Z" fill="#f4f4f4" stroke="#c4c4c4"/></svg>
<svg class="a" style="left:1198px;top:420px" width="18" height="18" viewBox="0 0 18 18"><path d="M8 1h2v4h2l-3 3-3-3h2z" fill="#c0c0c0"/><path d="M1 11 L1 15 L17 15 L17 11" fill="none" stroke="#c4c4c4"/><path d="M4 9 Q5 9 5.5 10 L12.5 10 Q13 9 14 9 Q15.5 9.5 15 11 Q15.5 12.5 14 13 Q13 13 12.5 12 L5.5 12 Q5 13 4 13 Q2.5 12.5 3 11 Q2.5 9.5 4 9Z" fill="#f4f4f4" stroke="#c4c4c4"/></svg>
<svg class="a" style="left:1225px;top:421px" width="16" height="16" viewBox="0 0 16 16"><path d="M4 1h8v3l2 10q-6 2-12 0l2-10z" fill="#eee" stroke="#c4c4c4"/><path d="M6 5v9M8 5v10M10 5v9" stroke="#d4d4d4"/></svg>
<svg class="a" style="left:1251px;top:417px" width="24" height="24" viewBox="0 0 24 24"><rect x="8" y="8" width="16" height="15" fill="#8a8a8a"/><rect x="15" y="5" width="7" height="4" fill="#777"/><rect x="21" y="9" width="2" height="13" fill="#ddd"/><circle cx="16" cy="16" r="5.5" fill="#6a6a6a"/><circle cx="16" cy="16" r="3.5" fill="#bbb"/><circle cx="16" cy="16" r="1.8" fill="#333"/><path d="M7 0 L9 5 L13 3 L11 7 L15 10 L10 10 L9 15 L7 11 L2 13 L4 9 L0 6 L5 5Z" fill="#fff" stroke="#666" stroke-width="0.7"/></svg>
<svg class="a" style="left:1286px;top:422px" width="14" height="14" viewBox="0 0 14 14"><path d="M5.2 1 h3.6 v4.2 h4.2 v3.6 h-4.2 v4.2 h-3.6 v-4.2 h-4.2 v-3.6 h4.2z" fill="#333"/></svg>
<svg class="a" style="left:1312px;top:422px" width="14" height="14" viewBox="0 0 14 14"><path d="M2.5 1.5 h6 l3 3 v8 h-9z" fill="#fff" stroke="#444"/><path d="M8.5 1.5 v3 h3" fill="none" stroke="#444"/><path d="M9.5 6 v6" stroke="#bbb" stroke-width="2"/></svg>
<svg class="a" style="left:1338px;top:422px" width="14" height="14" viewBox="0 0 14 14"><rect x="0.5" y="0.5" width="13" height="13" rx="4" fill="#3a3a3a"/><path d="M4.3 4.3 L9.7 9.7 M9.7 4.3 L4.3 9.7" stroke="#fff" stroke-width="2.2"/></svg>
<!-- texture panel -->
<div class="a" style="left:1025px;top:442px;width:341px;height:1px;background:#a9a9aa"></div>
<div class="a" style="left:1025px;top:443px;width:340px;height:18px;background:linear-gradient(#eaeaeb,#dcdcde);border-top:1px solid #c0c0c0;border-bottom:1px solid #a9a9aa;border-right:1px solid #b8b8b8"></div>
<div class="a" style="left:1025px;top:445px;width:19px;height:16px;background:linear-gradient(#f0f0f1,#d9d9db);border:1px solid #b4b4b6"></div>
<svg class="a" style="left:1030px;top:449px" width="10" height="8"><path d="M0 0L3 4L0 8Z" fill="#888"/><rect x="4" y="0" width="6" height="2" fill="#999"/><rect x="4" y="3" width="6" height="2" fill="#999"/><rect x="4" y="6" width="6" height="2" fill="#999"/></svg>
<div class="a" style="left:1044px;top:446px;width:78px;height:19px;background:#f3f6fb;border:1px solid #b4b4b6;border-bottom:none"></div>
<svg class="a" style="left:1050px;top:448px" width="13" height="13" viewBox="0 0 13 13"><circle cx="6.5" cy="6.5" r="6" fill="#444"/><path d="M2 3 Q6 6 5 12 M5 1 Q10 5 8 12.5 M9 1 Q12 5 11.5 10" fill="none" stroke="#ddd" stroke-width="1"/></svg>
<div class="t" style="left:1069px;top:450px;font-size:11px;color:#222;transform:scaleX(0.890);transform-origin:0 0">テクスチャ</div>
<div class="a" style="left:1122px;top:446px;width:28px;height:15px;background:linear-gradient(#e6e7e9,#d6d7da);border:1px solid #b8b8ba;border-bottom:none"></div>
<div class="a" style="left:1150px;top:446px;width:28px;height:15px;background:linear-gradient(#e6e7e9,#d6d7da);border:1px solid #b8b8ba;border-bottom:none"></div>
<div class="a" style="left:1178px;top:446px;width:28px;height:15px;background:linear-gradient(#e6e7e9,#d6d7da);border:1px solid #b8b8ba;border-bottom:none"></div>
<div class="a" style="left:1206px;top:446px;width:27px;height:15px;background:linear-gradient(#e6e7e9,#d6d7da);border:1px solid #b8b8ba;border-bottom:none"></div>
<svg class="a" style="left:1130px;top:449px" width="12" height="10"><rect x="0.5" y="0.5" width="11" height="9" fill="none" stroke="#b0b0b0"/><path d="M0.5 3.5 L3.5 3.5 L3.5 6.5 L8.5 6.5 L8.5 3.5 L11.5 3.5" fill="none" stroke="#b0b0b0"/></svg>
<svg class="a" style="left:1158px;top:448px" width="12" height="12" viewBox="0 0 12 12"><path d="M9 0 L10 6 L6 11 L2 11 L6 7Z" fill="none" stroke="#b0b0b0"/><path d="M0 11.5h6" stroke="#b0b0b0"/></svg>
<svg class="a" style="left:1186px;top:449px" width="12" height="12" viewBox="0 0 12 12"><circle cx="6" cy="6" r="5.3" fill="none" stroke="#b0b0b0"/><path d="M1 5h10M1 8h10" stroke="#b0b0b0"/></svg>
<svg class="a" style="left:1214px;top:449px" width="11" height="11"><rect x="1" y="1" width="9" height="9" fill="none" stroke="#999" stroke-width="2"/></svg>
<!-- texture list -->
<div class="a" style="left:1025px;top:466px;width:332px;height:302px;background:#f3f6fb;border-top:1px solid #8c8c8e;border-left:1px solid #8c9096;border-right:1px solid #a4a6aa"></div><div class="a" style="left:1026px;top:467px;width:1px;height:301px;background:#fafcff"></div>
<div class="a" style="left:1344px;top:467px;width:12px;height:301px;background:#d8d9de;border-left:1px solid #bfc1c6;border-top:2px solid #8e9196"></div>
<div class="a" style="left:1034px;top:471px;width:48px;height:48px;background:#dcc9aa"></div>
<div class="a" style="left:1038px;top:480px;width:3px;height:4px;background:#fff;border-radius:2px"></div>
<div class="a" style="left:1068px;top:491px;width:14px;height:2px;background:#f2ece2"></div>
<div class="a" style="left:1038px;top:504px;width:28px;height:1px;background:#a08060;opacity:0.7"></div>
<div class="t" style="left:1101px;top:476px;font-size:12px;color:#111;transform:scaleX(0.904);transform-origin:0 0">mat1</div>
<!-- right edge bars -->
<div class="a" style="left:1359px;top:86px;width:7px;height:356px;background:#eceef2"></div><div class="a" style="left:1360px;top:86px;width:1px;height:356px;background:#c0c2c6"></div><div class="a" style="left:1363px;top:86px;width:1px;height:356px;background:#c0c2c6"></div><div class="a" style="left:1357px;top:461px;width:9px;height:307px;background:#eceef2"></div><div class="a" style="left:1358px;top:461px;width:1px;height:307px;background:#c0c2c6"></div><div class="a" style="left:1362px;top:461px;width:1px;height:307px;background:#c0c2c6"></div>

<div class="a" style="left:0;top:766px;width:1366px;height:1px;background:#28303a"></div><div class="a" style="left:0;top:767px;width:1366px;height:1px;background:#a0a6ae"></div>
</body></html>
